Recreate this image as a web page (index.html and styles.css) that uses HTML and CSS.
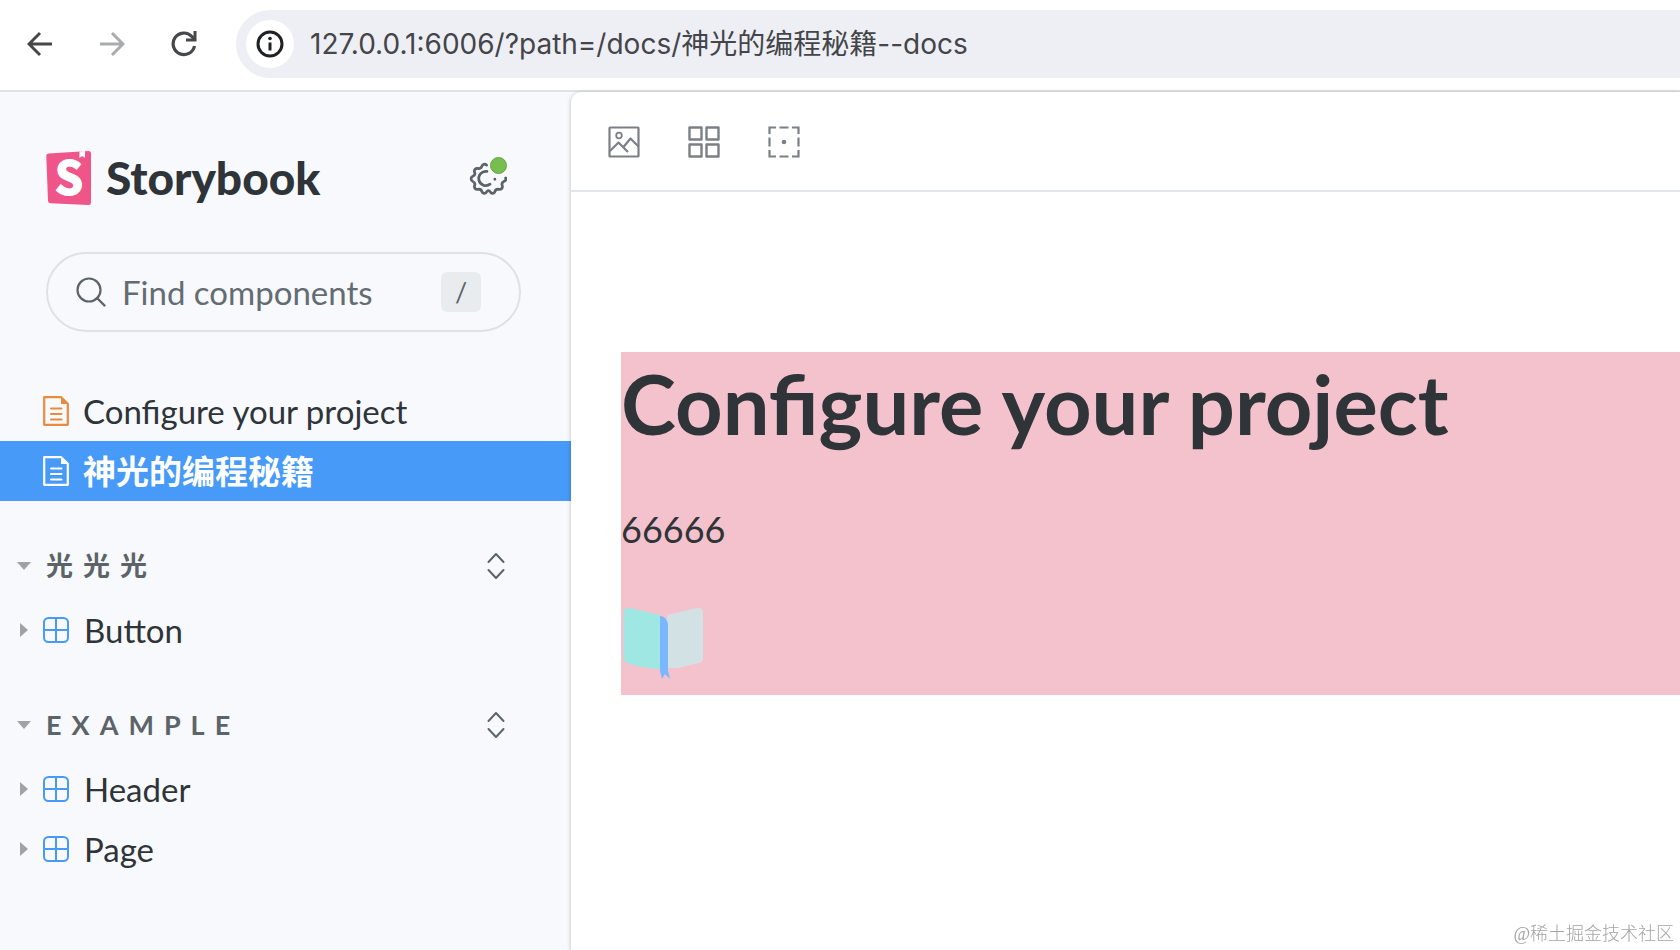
FILE: index.html
```
<!DOCTYPE html>
<html lang="zh-CN">
<head>
<meta charset="utf-8">
<title>Storybook</title>
<meta name="viewport" content="width=device-width, initial-scale=1">
<link rel="stylesheet" href="styles.css">
</head>
<body>
<svg class="sprite" aria-hidden="true">
  <symbol id="doc" viewBox="0 0 26 30"><path d="M1.200 1.200h17l6.600 6.600v21H1.200z" fill="none" stroke="currentColor" stroke-width="2.200" stroke-linejoin="round"/><path d="M18 1l7 7H18z" fill="currentColor"/><path d="M8 12.500h10.500M8 18h10.500M8 23.500h10.500" stroke="currentColor" stroke-width="2" stroke-linecap="round"/></symbol>
  <symbol id="component" viewBox="0 0 28 28"><rect x="2" y="2" width="24" height="24" rx="4.500" fill="none" stroke="currentColor" stroke-width="2"/><path d="M14 2v24M2 14h24" stroke="currentColor" stroke-width="2"/></symbol>
  <symbol id="expand" viewBox="0 0 20 28"><path d="M2.500 10L10 2l7.500 8M2.500 18l7.500 8 7.500-8" fill="none" stroke="currentColor" stroke-width="2" stroke-linecap="round" stroke-linejoin="round"/></symbol>
</svg>

<header class="browser">
  <nav class="browser-nav" aria-label="Browser">
    <button class="icon-btn" aria-label="Back"><svg width="26" height="26" viewBox="0 0 26 26"><path d="M25 13H3M13 2L2 13l11 11" fill="none" stroke="currentColor" stroke-width="3"/></svg></button>
    <button class="icon-btn muted" aria-label="Forward"><svg width="26" height="26" viewBox="0 0 26 26"><path d="M1 13h22M13 2l11 11-11 11" fill="none" stroke="currentColor" stroke-width="3"/></svg></button>
    <button class="icon-btn" aria-label="Reload"><svg width="26" height="26" viewBox="0 0 26 26"><path d="M23.500 15A10.800 10.800 0 1 1 20.700 5.300L23 8" fill="none" stroke="currentColor" stroke-width="3.200"/><path d="M25.500 0v10.500H15V7.500h7.500V0z" fill="currentColor"/></svg></button>
  </nav>
  <div class="address">
    <button class="site-info" aria-label="Site information"><svg width="28" height="28" viewBox="0 0 28 28"><circle cx="14" cy="14" r="12" fill="none" stroke="currentColor" stroke-width="3"/><path d="M14 12.500v8" stroke="currentColor" stroke-width="3"/><circle cx="14" cy="8.500" r="1.800" fill="currentColor"/></svg></button>
    <input class="url" type="text" aria-label="Address" value="127.0.0.1:6006/?path=/docs/神光的编程秘籍--docs">
  </div>
</header>

<div class="app">
  <aside class="sidebar">
    <div class="brand">
      <a class="brand-link" href="#">
        <svg class="brand-mark" width="46" height="56" viewBox="0 0 46 56" aria-hidden="true"><path d="M2.500 3.500L42.500 1a2.500 2.500 0 0 1 2.500 2.500v49a2.500 2.500 0 0 1-2.600 2.500L4.500 53.300A2.500 2.500 0 0 1 2 51L.3 6a2.500 2.500 0 0 1 2.200-2.500z" fill="#f0558a"/><path d="M33.500 1.500l5.500-.4v7l-2.700-2.200-3 2.200z" fill="#fff"/><text class="brand-letter" x="23" y="44" text-anchor="middle">S</text></svg>
        <span class="brand-name">Storybook</span>
      </a>
      <button class="settings" aria-label="Settings">
        <svg width="38" height="40" viewBox="0 0 36 38"><g transform="translate(0 -2)" fill="none" stroke="currentColor" stroke-width="2.600" stroke-linecap="round"><path d="M15.200 4.800C13.500 3.200 11.300 3.900 10.700 5.800 10.100 7.700 8.800 8.300 7 7.900 4.700 7.400 3 9.300 3.800 11.500 4.500 13.300 3.700 14.600 2 15.400-.1 16.400-.1 19.200 2 20.200 3.700 21 4.500 22.300 3.800 24.100 3 26.300 4.700 28.300 7 27.800 8.800 27.400 10.100 28 10.700 29.800 11.400 32 14.100 32.200 15.200 30.200 16.100 28.500 17.700 28.500 18.600 30.200 19.700 32.200 22.400 32 23.100 29.800 23.700 28 25 27.400 26.800 27.800 29.100 28.300 30.800 26.300 30 24.100 29.300 22.300 30 21 31.800 20.200 33.200 19.500 33.700 18.100 33.200 16.900" transform="translate(1.500 4)"/><path d="M17 14.700a6.800 6.800 0 1 0 3 12.200"/><path d="M24.500 22v.2"/></g></svg>
        <span class="badge"></span>
      </button>
    </div>

    <label class="search">
      <svg width="30" height="30" viewBox="0 0 30 30" aria-hidden="true"><circle cx="13" cy="13" r="11.500" fill="none" stroke="currentColor" stroke-width="2.200"/><path d="M21 21l7.500 7.500" stroke="currentColor" stroke-width="2.400" stroke-linecap="round"/></svg>
      <input type="text" placeholder="Find components" aria-label="Find components">
      <kbd>/</kbd>
    </label>

    <nav class="tree" aria-label="Stories">
      <a class="row" href="#"><svg class="doc orange"><use href="#doc"/></svg><span>Configure your project</span></a>
      <a class="row selected" href="#" aria-current="page"><svg class="doc"><use href="#doc"/></svg><span>神光的编程秘籍</span></a>

      <section class="group">
        <div class="group-head">
          <button class="group-toggle"><i class="caret-down"></i><span>光光光</span></button>
          <button class="expand" aria-label="Expand 光光光"><svg><use href="#expand"/></svg></button>
        </div>
        <a class="row branch" href="#"><i class="caret-right"></i><svg class="component"><use href="#component"/></svg><span>Button</span></a>
      </section>

      <section class="group">
        <div class="group-head">
          <button class="group-toggle"><i class="caret-down"></i><span>EXAMPLE</span></button>
          <button class="expand" aria-label="Expand Example"><svg><use href="#expand"/></svg></button>
        </div>
        <a class="row branch" href="#"><i class="caret-right"></i><svg class="component"><use href="#component"/></svg><span>Header</span></a>
        <a class="row branch" href="#"><i class="caret-right"></i><svg class="component"><use href="#component"/></svg><span>Page</span></a>
      </section>
    </nav>
  </aside>

  <main class="preview">
    <div class="toolbar" role="toolbar">
      <button class="icon-btn" aria-label="Change background"><svg width="32" height="32" viewBox="0 0 32 32" fill="none" stroke="currentColor" stroke-width="2.200" stroke-linejoin="round"><rect x="1.500" y="1.500" width="29" height="29" rx=".5"/><circle cx="11" cy="9.500" r="2.800" stroke-width="1.800"/><path d="M2 25l8.500-8.500L20 26M15.500 21l7-8.500 8 8"/></svg></button>
      <button class="icon-btn" aria-label="Apply grid"><svg width="32" height="32" viewBox="0 0 32 32" fill="none" stroke="currentColor" stroke-width="2.400" stroke-linejoin="round"><rect x="1.500" y="1.500" width="12" height="12"/><rect x="18.500" y="1.500" width="12" height="12"/><rect x="1.500" y="18.500" width="12" height="12"/><rect x="18.500" y="18.500" width="12" height="12"/></svg></button>
      <button class="icon-btn" aria-label="Apply outlines"><svg width="32" height="32" viewBox="0 0 32 32" fill="none" stroke="currentColor" stroke-width="2.200"><path d="M1.500 8V1.500H8M24 1.500h6.500V8M30.500 24v6.500H24M8 30.500H1.500V24M11.500 1.500h9M11.500 30.500h9M1.500 11.500v9M30.500 11.500v9"/><circle cx="16" cy="16" r="2.300" fill="currentColor" stroke="none"/></svg></button>
    </div>
    <div class="canvas">
      <article class="docs">
        <h1>Configure your project</h1>
        <p>66666</p>
        <svg class="book" width="84" height="80" viewBox="0 0 84 80" role="img" aria-label="Open book"><path d="M2.500 10Q3 4 9 5L39 12V66Q20 65 6 60Q2.500 58 2.500 55z" fill="#9fe7e3"/><path d="M46 12L76 5Q82 4.500 82 10V55Q82 59 78 60L57 65H46z" fill="#d2e1e4"/><path d="M39 13q6 0 8 8v47l2 8-5-5-3 5-2-8z" fill="#79b8fc"/></svg>
      </article>
    </div>
  </main>
</div>
<div class="watermark">@稀土掘金技术社区</div>
</body>
</html>
```
FILE: styles.css
```
:root {
  --ui: Lato, "Noto Sans CJK SC", sans-serif;
  --ink: #2e3438;
  --muted: #5c6469;
  --line: #dfe2e6;
  --blue: #479af7;
}

* { box-sizing: border-box; }

body {
  margin: 0;
  min-height: 100vh;
  display: flex;
  flex-direction: column;
  overflow: hidden;
  background: #fff;
  color: var(--ink);
  font-family: var(--ui);
}

button {
  border: 0;
  padding: 0;
  background: none;
  color: inherit;
  font: inherit;
  display: flex;
  align-items: center;
}

a { color: inherit; text-decoration: none; }
svg { display: block; flex: none; }
.sprite { display: none; }

.browser {
  display: flex;
  align-items: center;
  gap: 39px;
  padding: 10px 0 12px 27px;
  border-bottom: 2px solid var(--line);
}

.browser-nav { display: flex; gap: 46px; color: #464749; }
.browser-nav .muted { color: #aaabac; }

.address {
  flex: 1;
  display: flex;
  align-items: center;
  gap: 16px;
  height: 68px;
  padding-left: 10px;
  border-radius: 34px 0 0 34px;
  background: #eeeff5;
}

.site-info {
  justify-content: center;
  width: 48px;
  height: 48px;
  border-radius: 50%;
  background: #fff;
  color: #1f2022;
}

.url {
  flex: 1;
  min-width: 0;
  border: 0;
  padding: 0;
  outline: 0;
  background: none;
  color: #434548;
  font: 28px/40px Inter, "Noto Sans CJK SC", sans-serif;
}

.app {
  flex: 1;
  display: flex;
  background: #f7f9fd;
}

.sidebar { flex: 0 0 34%; max-width: 571px; }

.brand {
  display: flex;
  align-items: center;
  justify-content: space-between;
  padding: 58px 64px 0 46px;
}

.brand-link { display: flex; align-items: center; gap: 14px; }
.brand-mark { overflow: visible; }
.brand-name { font-size: 46px; line-height: 56px; font-weight: 900; }
.brand-letter {
  font: 700 44px "Noto Sans CJK JP", sans-serif;
  fill: #fff;
  stroke: #fff;
  stroke-width: 2px;
}

.settings { position: relative; color: var(--muted); }
.badge {
  position: absolute;
  top: -1px;
  right: 0;
  width: 17px;
  height: 17px;
  border: 1px solid #66a83f;
  border-radius: 50%;
  background: #78bd50;
}

.search {
  display: flex;
  align-items: center;
  gap: 16px;
  height: 80px;
  margin: 46px 50px 0 46px;
  padding: 0 38px 0 28px;
  border: 2px solid #dde2e6;
  border-radius: 40px;
  color: var(--muted);
}

.search input {
  flex: 1;
  min-width: 0;
  border: 0;
  padding: 0;
  outline: 0;
  background: none;
  font: 33px/40px var(--ui);
}
.search input::placeholder { color: #646c72; opacity: 1; }

.search kbd {
  width: 40px;
  height: 40px;
  border-radius: 6px;
  background: #e9ecef;
  font: 27px/40px var(--ui);
  text-align: center;
}

.tree { padding-top: 49px; }

.row {
  display: flex;
  align-items: center;
  height: 60px;
  padding-left: 43px;
  gap: 14px;
  font-size: 33px;
  line-height: 40px;
}
.row.selected { background: var(--blue); color: #fff; font-weight: 700; }
.row.branch { padding-left: 20px; }

.doc { width: 26px; height: 30px; }
.orange { color: #e98a3c; }
.component { width: 28px; height: 28px; color: var(--blue); }

.caret-right {
  width: 8px;
  height: 14px;
  background: #9fa3a7;
  clip-path: polygon(0 0, 100% 50%, 0 100%);
}
.caret-down {
  width: 14px;
  height: 8px;
  background: #9fa3a7;
  clip-path: polygon(0 0, 100% 0, 50% 100%);
}

.group { padding-top: 31px; }

.group-head {
  display: flex;
  align-items: center;
  justify-content: space-between;
  height: 68px;
  padding: 0 65px 0 17px;
  color: var(--muted);
}
.group-toggle {
  gap: 15px;
  font-size: 27px;
  line-height: 32px;
  font-weight: 700;
  letter-spacing: 10px;
}
.expand svg { width: 20px; height: 28px; }

.preview {
  flex: 1;
  display: flex;
  flex-direction: column;
  min-width: 0;
  border-radius: 10px 0 0 0;
  background: #fff;
  box-shadow: 0 1px 4px rgba(0, 0, 0, .25);
}

.toolbar {
  display: flex;
  align-items: center;
  gap: 48px;
  height: 100px;
  padding: 2px 37px 0;
  border-bottom: 2px solid #e3e6e8;
  color: #7a8084;
}

.canvas { padding: 160px 0 0 50px; }

.docs { padding-bottom: 12px; background: #f4c2cc; }
.docs h1 {
  margin: 0;
  padding: 3px 0 52px;
  font-size: 83px;
  line-height: 96px;
  font-weight: 700;
}
.docs p { margin: 0 0 48px; font-size: 36px; line-height: 52px; }

.watermark {
  position: fixed;
  right: 6px;
  bottom: 4px;
  color: #a3a3a3;
  font: 300 18px/24px "Liberation Serif", "Noto Sans CJK SC", serif;
}
```
